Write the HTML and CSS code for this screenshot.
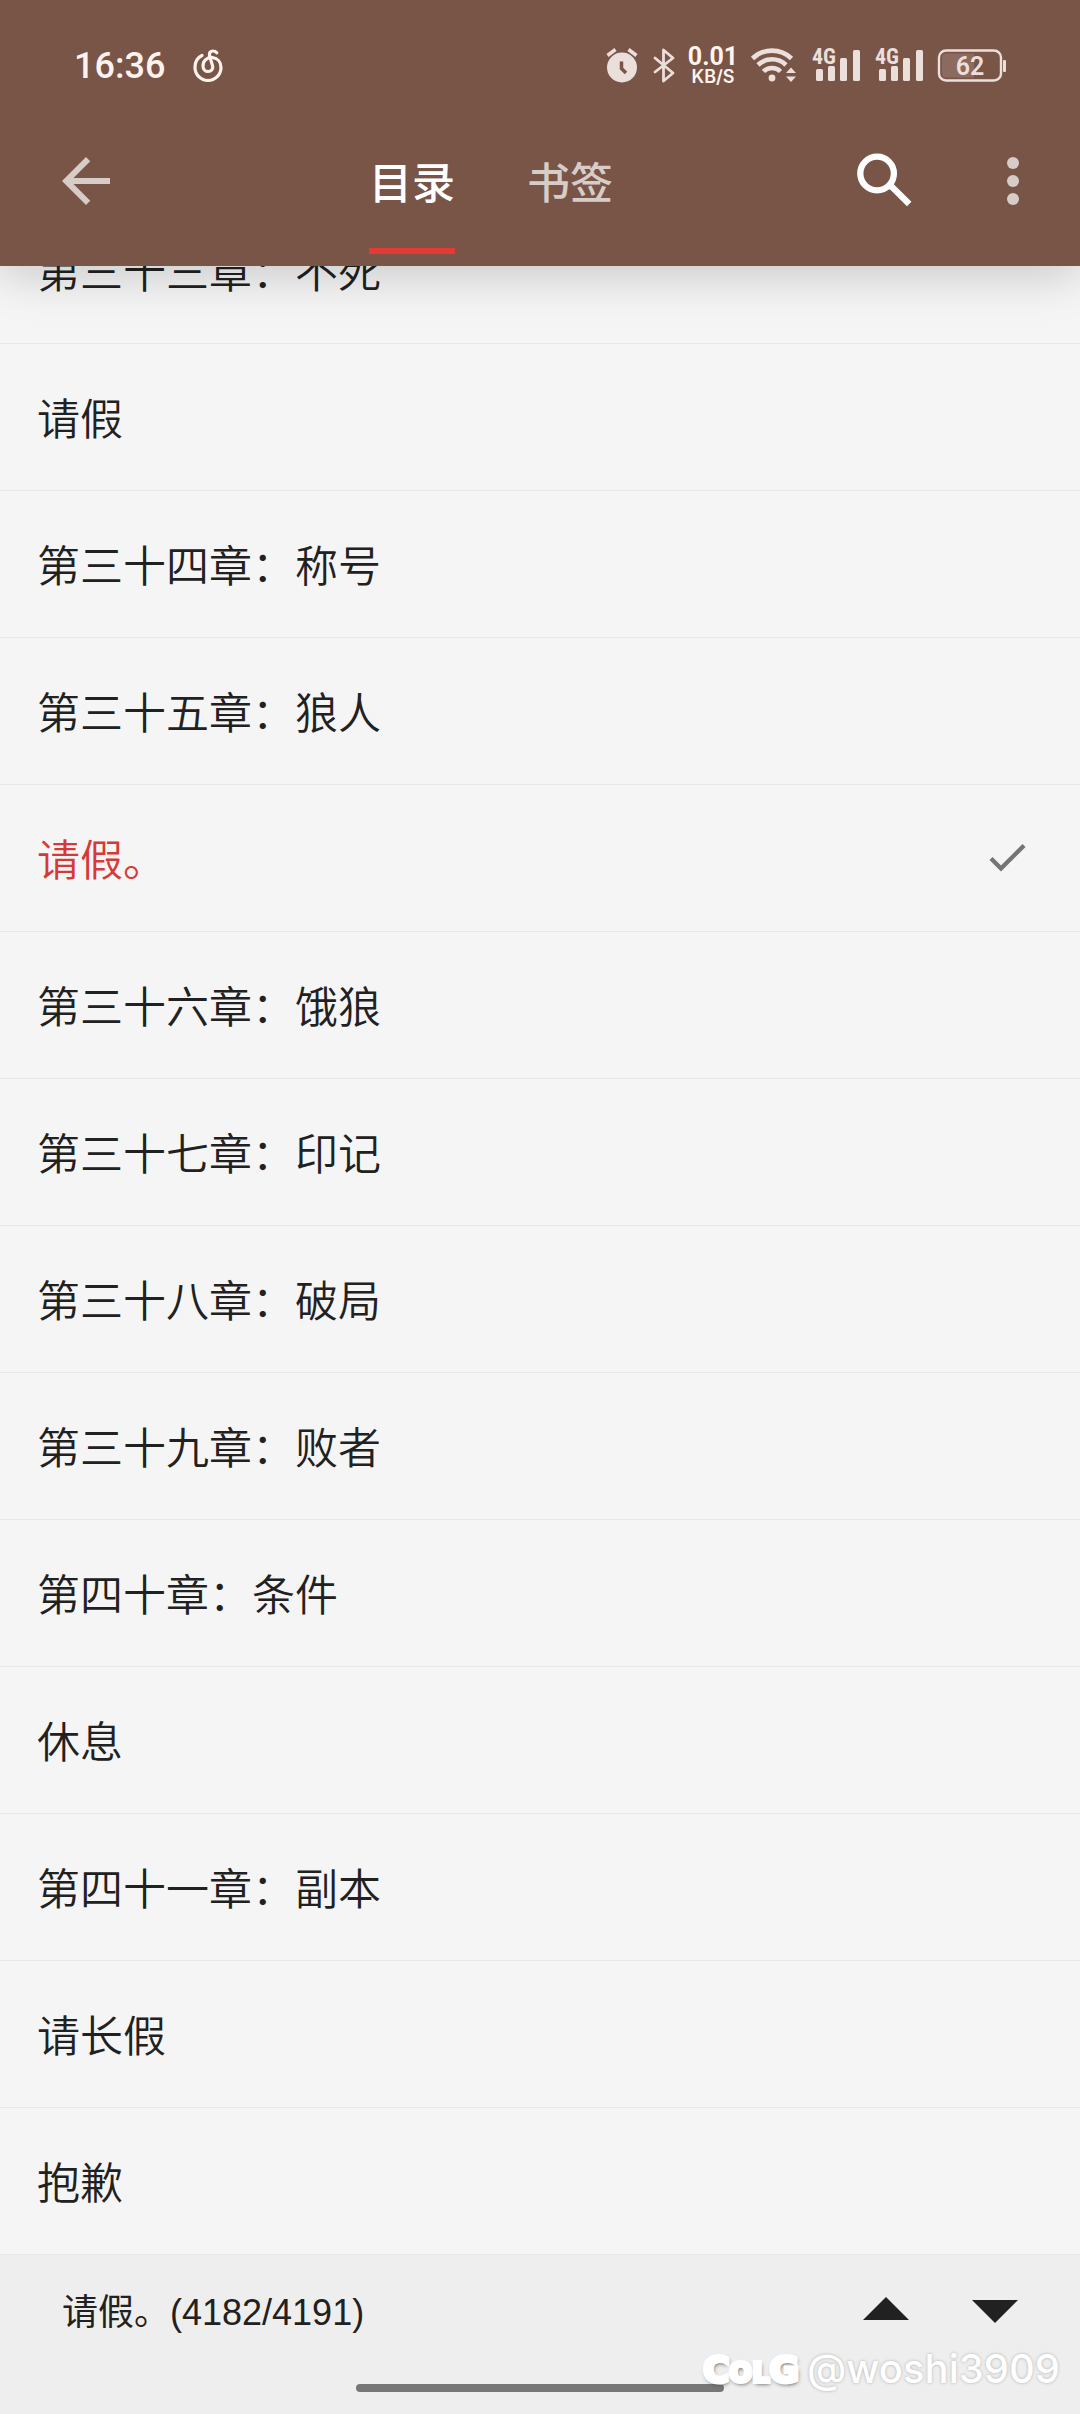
FILE: index.html
```
<!DOCTYPE html>
<html lang="zh-CN">
<head>
  <meta charset="UTF-8" />
  <meta name="viewport" content="width=device-width, initial-scale=1.0" />
  <title>目录</title>
  <link rel="stylesheet" href="styles.css">
</head>
<body>
  <header>
    <div class="status-bar">
      <span class="clock">16:36</span>
      <svg class="music" width="30" height="34" viewBox="0 0 30 34" fill="none" stroke="currentColor" stroke-width="3.200" stroke-linecap="round">
        <path d="M9 6.500C4.500 8.500 2 13 2 18.500a13 13 0 0 0 26 0c0-5.500-3.500-9.300-8.500-10-5.500-.6-9.500 3.500-9.500 8.500 0 3.500 2.400 5.500 5.200 5.500s5-2.400 4.500-5.200L16.500 6.500C16 3.500 17.500 2 20 2c1.500 0 2.800.6 3.800 1.800"/>
      </svg>
      <div class="status-icons">
        <svg width="32" height="36" viewBox="0 0 32 36">
          <circle cx="16" cy="19.500" r="15" fill="currentColor"/>
          <path d="M1.500 7.500 9.500 1.500M30.500 7.500 22.500 1.500" stroke="currentColor" stroke-width="3.500" fill="none"/>
          <path d="M15.500 13.500v7l4.500 4.500" stroke="#795548" stroke-width="3.500" fill="none"/>
        </svg>
        <svg width="22" height="36" viewBox="0 0 22 36" fill="none" stroke="currentColor" stroke-width="2.800" stroke-linejoin="round" stroke-linecap="round">
          <path d="M2 10l18 15-9.500 8V2L20 10 2 24"/>
        </svg>
        <div class="speed"><b>0.01</b><small>KB/S</small></div>
        <svg width="46" height="36" viewBox="0 0 46 36" fill="none" stroke="currentColor" stroke-width="4.600">
          <path d="M1.500 10.500a28 28 0 0 1 39 0M7 17a20 20 0 0 1 28 0M12.500 23.500a12 12 0 0 1 17 0"/>
          <circle cx="21" cy="30" r="3.400" fill="currentColor" stroke="none"/>
          <path d="M35 25l5-5.500 5 5.500zM35 28.500h10l-5 5.500z" fill="currentColor" stroke="none"/>
        </svg>
        <svg class="signal" width="48" height="36" viewBox="0 0 48 36" fill="currentColor">
          <text x="0" y="16">4G</text>
          <rect x="4" y="21" width="7" height="12" rx="1.500"/>
          <rect x="16" y="18" width="7" height="15" rx="1.500"/>
          <rect x="28" y="10" width="7" height="23" rx="1.500"/>
          <rect x="41" y="2" width="7" height="31" rx="1.500"/>
        </svg>
        <svg class="signal" width="48" height="36" viewBox="0 0 48 36" fill="currentColor">
          <text x="0" y="16">4G</text>
          <rect x="4" y="21" width="7" height="12" rx="1.500"/>
          <rect x="16" y="18" width="7" height="15" rx="1.500"/>
          <rect x="28" y="10" width="7" height="23" rx="1.500"/>
          <rect x="41" y="2" width="7" height="31" rx="1.500"/>
        </svg>
        <svg class="battery" width="68" height="36" viewBox="0 0 68 36" fill="currentColor">
          <rect x="1" y="2.500" width="62" height="30" rx="7" fill="none" stroke="currentColor" stroke-width="2.400"/>
          <path d="M8 5.500h28v24H8a4 4 0 0 1-4-4v-16a4 4 0 0 1 4-4z" opacity=".16"/>
          <rect x="65" y="12" width="3" height="12" rx="1"/>
          <text x="32" y="27" text-anchor="middle">62</text>
        </svg>
      </div>
    </div>
    <div class="toolbar">
      <button class="icon-btn" aria-label="返回">
        <svg viewBox="0 0 24 24" fill="currentColor"><path d="M20 11H7.830l5.590-5.590L12 4l-8 8 8 8 1.410-1.410L7.830 13H20v-2z"/></svg>
      </button>
      <nav class="tabs">
        <a class="active" href="#catalog">目录</a>
        <a href="#bookmarks">书签</a>
      </nav>
      <div class="tools">
        <button class="icon-btn white" aria-label="搜索">
          <svg viewBox="0 0 24 24" fill="none" stroke="currentColor" stroke-width="2.100"><circle cx="9.700" cy="9.500" r="5.600"/><path d="M14 13.800l.7.200 5.700 5.700"/></svg>
        </button>
        <button class="icon-btn" aria-label="更多">
          <svg viewBox="0 0 24 24" fill="currentColor"><circle cx="12" cy="6" r="2"/><circle cx="12" cy="12" r="2"/><circle cx="12" cy="18" r="2"/></svg>
        </button>
      </div>
    </div>
  </header>
  <ul class="chapters" id="catalog">
    <li><a href="#">第三十三章：不死</a></li>
    <li><a href="#">请假</a></li>
    <li><a href="#">第三十四章：称号</a></li>
    <li><a href="#">第三十五章：狼人</a></li>
    <li>
      <a class="current" href="#">请假。
        <svg width="72" height="72" viewBox="0 0 72 72" fill="none" stroke="#757575" stroke-width="4.400"><path d="M20 37.500l10 10 23-23"/></svg>
      </a>
    </li>
    <li><a href="#">第三十六章：饿狼</a></li>
    <li><a href="#">第三十七章：印记</a></li>
    <li><a href="#">第三十八章：破局</a></li>
    <li><a href="#">第三十九章：败者</a></li>
    <li><a href="#">第四十章：条件</a></li>
    <li><a href="#">休息</a></li>
    <li><a href="#">第四十一章：副本</a></li>
    <li><a href="#">请长假</a></li>
    <li><a href="#">抱歉</a></li>
  </ul>
  <footer>
    <div class="progress">
      <span>请假。(4182/4191)</span>
      <button class="jump" aria-label="上一章"><svg width="46" height="24" viewBox="0 0 46 24"><path d="M0 23 23 0l23 23z"/></svg></button>
      <button class="jump down" aria-label="下一章"><svg width="46" height="24" viewBox="0 0 46 24"><path d="M0 1h46L23 24z"/></svg></button>
    </div>
    <div class="home-bar"></div>
    <div class="watermark"><span class="logo">C<i>O</i><i>L</i>G</span><span>@woshi3909</span></div>
  </footer>
</body>
</html>
```
FILE: styles.css
```
* {
  box-sizing: border-box;
}
body {
  margin: 0;
  height: 100vh;
  display: flex;
  flex-direction: column;
  font-family: "Noto Sans CJK SC", sans-serif;
  background: #f5f5f5;
  color: #212121;
}
a {
  color: inherit;
  text-decoration: none;
}
button {
  border: none;
  background: none;
  padding: 0;
  color: inherit;
  cursor: pointer;
}
svg {
  display: block;
  overflow: visible;
}

/* top bar */
header {
  position: relative;
  z-index: 1;
  flex: none;
  background: #795548;
  color: #d7ccc8;
  box-shadow: 0 10px 44px rgba(0, 0, 0, 0.18);
}
.status-bar {
  display: flex;
  align-items: center;
  height: 96px;
  padding: 36px 74px 0 74px;
  color: #ebdfdb;
  font-family: Roboto, sans-serif;
}
.clock {
  font-size: 36px;
  font-weight: 500;
  color: #fff3ee;
}
.music {
  margin-left: 28px;
  color: #fff3ee;
}
.status-icons {
  display: flex;
  align-items: center;
  gap: 15px;
  margin-left: auto;
}
.speed {
  width: 46px;
  display: flex;
  flex-direction: column;
  align-items: center;
  color: #fff3ee;
}
.speed b {
  font: 700 25px/22px Roboto, sans-serif;
}
.speed small {
  font: 600 18px/18px Inter, sans-serif;
}
.signal text {
  font: 700 22px "Roboto Condensed", Roboto, sans-serif;
}
.battery text {
  font: 600 25px Roboto, sans-serif;
}
.toolbar {
  display: flex;
  align-items: stretch;
  height: 170px;
  padding: 0 31px 0 50px;
}
.icon-btn {
  width: 72px;
}
.icon-btn.white {
  color: #fff;
}
.tabs {
  flex: 1;
  display: flex;
  justify-content: center;
  gap: 72px;
  padding: 0 0 12px 12px;
}
.tabs a {
  padding-top: 16px;
  font-size: 43px;
  font-weight: 500;
  line-height: 136px;
  border-bottom: 6px solid transparent;
}
.tabs .active {
  color: #fff;
  border-color: #e53935;
}
.tools {
  display: flex;
  gap: 57px;
}

/* chapter list, scrolled so its last row meets the footer */
.chapters {
  flex: 1;
  min-height: 0;
  margin: 0;
  padding: 0;
  list-style: none;
  display: flex;
  flex-direction: column;
  justify-content: flex-end;
  overflow: hidden;
}
.chapters li {
  flex: none;
  border-bottom: 1px solid #e8e8e8;
}
.chapters a {
  display: flex;
  align-items: center;
  justify-content: space-between;
  height: 146px;
  padding: 0 37px 2px;
  font-size: 43px;
  font-weight: 350;
}
.chapters .current {
  color: #d73a36;
}

/* bottom bar */
footer {
  position: relative;
  flex: none;
  height: 159px;
  background: #eee;
}
.progress {
  display: flex;
  align-items: center;
  gap: 63px;
  height: 108px;
  padding: 0 62px;
  font-family: "Liberation Sans", "Noto Sans CJK SC", sans-serif;
  font-size: 36px;
}
.progress span {
  flex: 1;
}
.jump svg {
  fill: #212121;
}
.jump.down {
  padding-top: 4px;
}
.home-bar {
  width: 34%;
  height: 8px;
  margin: 21px auto 0;
  border-radius: 4px;
  background: #777;
}
.watermark {
  position: absolute;
  right: 20px;
  bottom: 16px;
  display: flex;
  align-items: center;
  gap: 8px;
  color: #fff;
  font: 500 40px/50px Inter, sans-serif;
  text-shadow: 0 0 3px #aaa;
}
.logo {
  padding-top: 6px;
  font: 700 36px/50px "DejaVu Sans", sans-serif;
  -webkit-text-stroke: 4px #fff;
  text-shadow: 1px 2px 4px #444;
}
.logo i {
  font-size: 27px;
  font-style: normal;
}
```
